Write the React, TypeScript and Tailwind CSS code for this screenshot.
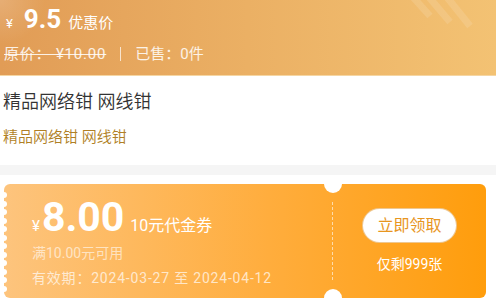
export default function App() {
  const scallops = Array.from({ length: 12 });
  return (
    <div className="w-[496px] h-[306px] overflow-hidden bg-white font-['Roboto','Noto_Sans_CJK_SC',sans-serif]">
      {/* price banner */}
      <div className="relative h-[76px] border-b border-[#f5d6a3] bg-[radial-gradient(circle_at_0_0,rgba(255,255,255,0.18),transparent_45px),linear-gradient(90deg,#e19c56,#ebb064_50%,#f3c273)] pl-[4px] text-white">
        <svg className="absolute right-[22px] top-0" width="64" height="30" viewBox="0 0 64 30">
          <g stroke="rgba(255,255,255,0.12)" strokeWidth="7">
            <line x1="2" y1="-4" x2="20" y2="16" />
            <line x1="18" y1="-4" x2="40" y2="22" />
            <line x1="36" y1="-4" x2="60" y2="26" />
          </g>
        </svg>
        <div className="flex items-baseline pt-[1px]">
          <span className="ml-[2px] text-[13px]">¥</span>
          <span className="ml-[11px] text-[26px] font-bold leading-[36px]">9.5</span>
          <span className="ml-[7px] text-[15px]">优惠价</span>
        </div>
        <div className="mt-[6px] flex items-center text-[15px] text-white/85">
          <span className="line-through tracking-[0.8px]">原价： ¥10.00</span>
          <span className="mx-[14px] h-[14px] w-px bg-white/70" />
          <span>已售：0件</span>
        </div>
      </div>

      {/* title */}
      <div className="h-[89px] pl-[3px] pt-[14px]">
        <div className="text-[18px] font-[350] leading-[24px] text-[#333333]">精品网络钳 网线钳</div>
        <div className="mt-[13px] text-[15px] font-[350] leading-[20px] text-[#b07f25]">精品网络钳 网线钳</div>
      </div>
      <div className="h-[10px] bg-[#f5f5f5]" />

      {/* coupon */}
      <div className="pl-[4px] pr-[10px] pt-[9px]">
        <div className="relative flex h-[114px] rounded-[6px] bg-[linear-gradient(90deg,#fdc47d,#ffad3d_55%,#ff9d0c)] text-white">
          <div className="absolute -left-[3px] top-[8px] flex flex-col gap-[2.5px]">
            {scallops.map((_, i) => (
              <span key={i} className="block h-[6px] w-[6px] rounded-full bg-white" />
            ))}
          </div>
          <span className="absolute -top-[9px] left-[320px] h-[18px] w-[18px] rounded-full bg-white" />
          <span className="absolute -bottom-[9px] left-[320px] h-[18px] w-[18px] rounded-full bg-white" />

          <div className="my-[18px] w-[329px] border-r border-dashed border-white/60 pl-[28px]">
            <div className="-mt-[9px] flex items-baseline">
              <span className="text-[15px]">¥</span>
              <span className="ml-[2px] text-[41px] font-bold leading-[48px]">8.00</span>
              <span className="ml-[6px] text-[16px]">10元代金券</span>
            </div>
            <div className="mt-[2px] text-[14px] leading-[20px] text-white/60">满10.00元可用</div>
            <div className="mt-[5px] text-[14px] leading-[20px] tracking-[0.8px] text-white/70">有效期：2024-03-27 至 2024-04-12</div>
          </div>

          <div className="flex flex-1 flex-col items-center pt-[24px]">
            <div className="flex h-[35px] w-[95px] items-center justify-center rounded-full border border-[#e3a248]/60 bg-white text-[16px] text-[#e8961f]">
              立即领取
            </div>
            <div className="mt-[11px] text-[14px] leading-[20px]">仅剩999张</div>
          </div>
        </div>
      </div>
    </div>
  );
}
